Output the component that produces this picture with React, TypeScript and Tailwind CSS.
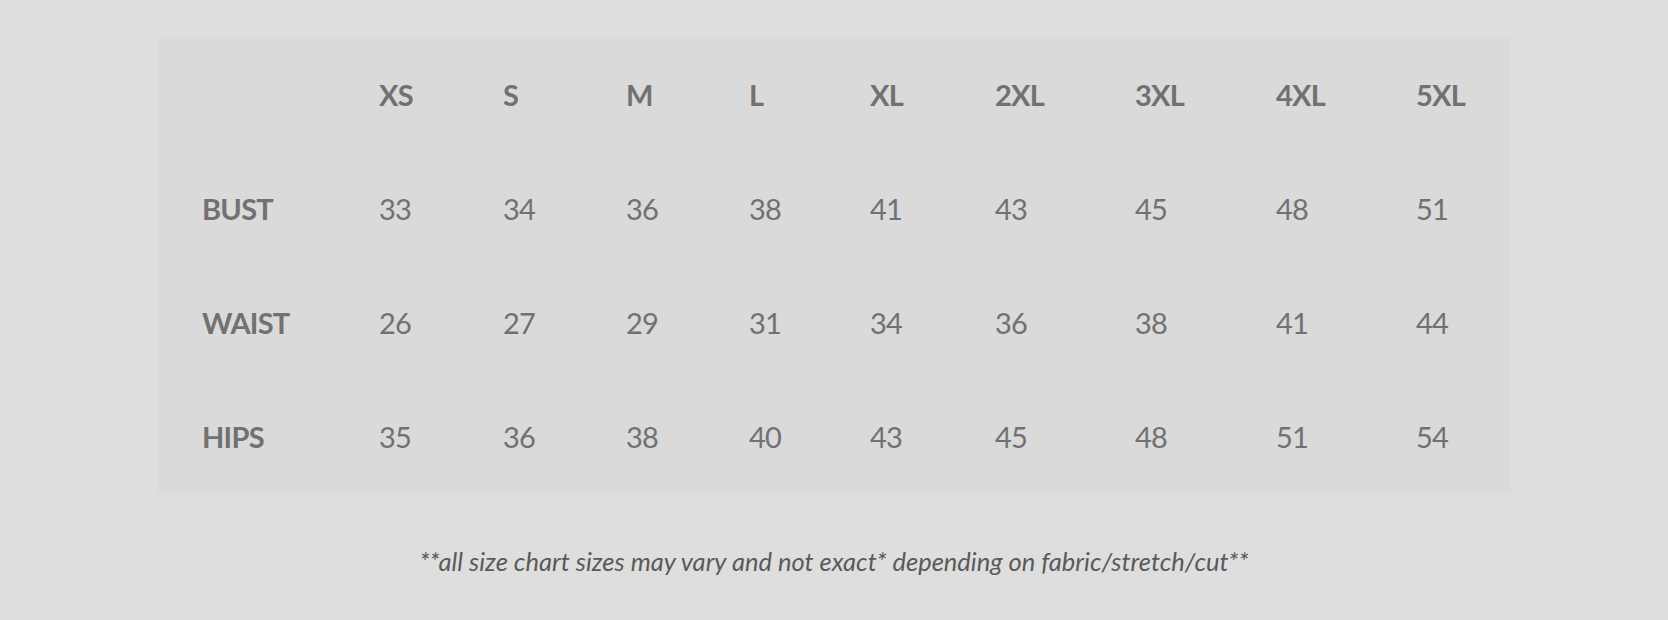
import React from 'react';

const sizes = ['XS', 'S', 'M', 'L', 'XL', '2XL', '3XL', '4XL', '5XL'];

const rows: { label: string; values: number[] }[] = [
  { label: 'BUST', values: [33, 34, 36, 38, 41, 43, 45, 48, 51] },
  { label: 'WAIST', values: [26, 27, 29, 31, 34, 36, 38, 41, 44] },
  { label: 'HIPS', values: [35, 36, 38, 40, 43, 45, 48, 51, 54] },
];

const cols =
  'grid grid-cols-[177px_124px_123px_123px_121px_125px_140px_141px_140px_1fr] items-center h-[114px] shrink-0';

const App: React.FC = () => {
  return (
    <div className="w-full h-[620px] bg-[#dedede] flex flex-col items-center font-['Lato',sans-serif] text-[#717171]">
      {/* Size table */}
      <div className="mt-[38px] w-[1354px] h-[455px] bg-[#dadada] px-[45px] flex flex-col">
        <div className={cols}>
          <span />
          {sizes.map((s) => (
            <span key={s} className="text-[29px] font-bold tracking-tight">
              {s}
            </span>
          ))}
        </div>
        {rows.map((r) => (
          <div key={r.label} className={cols}>
            <span className="text-[29px] font-bold tracking-tight">{r.label}</span>
            {r.values.map((v, i) => (
              <span key={i} className="text-[29px] tracking-tight">
                {v}
              </span>
            ))}
          </div>
        ))}
      </div>

      {/* Footnote */}
      <p className="mt-[49px] text-[25.5px] italic text-[#5a5a5a]">
        **all size chart sizes may vary and not exact* depending on fabric/stretch/cut**
      </p>
    </div>
  );
};

export default App;
